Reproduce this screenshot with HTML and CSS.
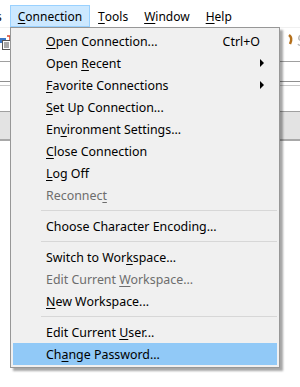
FILE: index.html
```html
<!DOCTYPE html>
<html lang="en">
<head>
    <meta charset="UTF-8">
    <title>Connection menu</title>
    <link rel="stylesheet" href="styles.css">
</head>
<body>
    <div class="menubar">
        <span class="menubar-item cut">s</span>
        <span class="menubar-item active"><u>C</u>onnection</span>
        <span class="menubar-item"><u>T</u>ools</span>
        <span class="menubar-item"><u>W</u>indow</span>
        <span class="menubar-item"><u>H</u>elp</span>
    </div>

    <div class="toolbar">
        <svg class="tool-left" width="11" height="15" viewBox="0 0 11 15">
            <rect x="0" y="3" width="6" height="5" fill="#3a78c8"/>
            <path d="M7 1 L10 1 L10 5" stroke="#d9452b" stroke-width="1.5" fill="none"/>
            <rect x="2.5" y="5.5" width="8" height="9" fill="#fff" stroke="#555"/>
            <line x1="4" y1="8" x2="9" y2="8" stroke="#555"/>
            <line x1="4" y1="10" x2="9" y2="10" stroke="#555"/>
            <line x1="4" y1="12" x2="9" y2="12" stroke="#555"/>
        </svg>
        <span class="spacer"></span>
        <svg class="tool-right" width="17" height="14" viewBox="0 0 17 14">
            <path d="M1 2 Q5 5 2 11" stroke="#b4701c" stroke-width="2.5" fill="none"/>
            <path d="M16 3 Q12 1 11 4 Q10 7 14 8 Q17 10 13 12 Q11 13 10 11" stroke="#b8b8b8" stroke-width="1.5" fill="none"/>
        </svg>
    </div>

    <div class="pane">
        <div class="pane-row"></div>
        <div class="pane-gap"></div>
        <div class="pane-tall"></div>
        <div class="pane-band"></div>
    </div>

    <div class="dropdown">
        <div class="item"><span class="label"><u>O</u>pen Connection...</span><span class="shortcut">Ctrl+O</span></div>
        <div class="item"><span class="label">Open <u>R</u>ecent</span><span class="arrow"></span></div>
        <div class="item"><span class="label"><u>F</u>avorite Connections</span><span class="arrow"></span></div>
        <div class="item"><span class="label"><u>S</u>et Up Connection...</span></div>
        <div class="item"><span class="label">En<u>v</u>ironment Settings...</span></div>
        <div class="item"><span class="label"><u>C</u>lose Connection</span></div>
        <div class="item"><span class="label"><u>L</u>og Off</span></div>
        <div class="item disabled"><span class="label">Reconnec<u>t</u></span></div>
        <div class="separator"></div>
        <div class="item"><span class="label">Choose Character Encoding...</span></div>
        <div class="separator"></div>
        <div class="item"><span class="label">Switch to Wor<u>k</u>space...</span></div>
        <div class="item disabled"><span class="label">Edit Current <u>W</u>orkspace...</span></div>
        <div class="item"><span class="label"><u>N</u>ew Workspace...</span></div>
        <div class="separator"></div>
        <div class="item"><span class="label">Edit Current <u>U</u>ser...</span></div>
        <div class="item selected"><span class="label">Ch<u>a</u>nge Password...</span></div>
    </div>
</body>
</html>
```

FILE: styles.css
```css
body {
    margin: 0;
    width: 300px;
    height: 387px;
    overflow: hidden;
    position: relative;
    background-color: #fff;
    font-family: 'Noto Sans', 'DejaVu Sans', sans-serif;
    font-size: 12px;
    color: #000;
}

u {
    text-decoration: underline;
    text-underline-offset: 2px;
}

/* menu bar */
.menubar {
    display: flex;
    height: 22px;
    padding-top: 5px;
    border-bottom: 1px solid #f0f0f0;
}

.menubar-item {
    display: flex;
    align-items: center;
    padding: 0 7px;
    border: 1px solid transparent;
    height: 20px;
}

.menubar-item.cut {
    margin-left: -12px;
}

.menubar-item.active {
    background-color: #cce8ff;
    border-color: #99d1ff;
}

/* toolbar behind the menu */
.toolbar {
    display: flex;
    align-items: center;
    height: 33px;
    border-bottom: 1px solid #a0a0a0;
}

.tool-left {
    margin-top: -4px;
}

.spacer {
    flex: 1;
}

.tool-right {
    margin-top: -10px;
    margin-right: -5px;
}

.pane-row {
    height: 19px;
    border-bottom: 1px solid #909090;
}

.pane-gap {
    height: 3px;
    border-bottom: 1px solid #c8c8c8;
}

.pane-tall {
    height: 25px;
    border-bottom: 1px solid #a0a0a0;
}

.pane-band {
    height: 27px;
    background-color: #e3e3e3;
    border-bottom: 2px solid #a8a8a8;
}

/* dropdown */
.dropdown {
    position: absolute;
    left: 10px;
    top: 27px;
    width: 264px;
    padding: 2px;
    background-color: #f0f0f0;
    border: 1px solid #979797;
    box-shadow: 3px 3px 2px rgba(0, 0, 0, 0.35);
    font-size: 12.4px;
}

.item {
    display: flex;
    align-items: center;
    height: 22px;
    padding-left: 33px;
    padding-right: 12px;
}

.item .label {
    flex: 1;
}

.item.disabled {
    color: #6d6d6d;
}

.item.selected {
    background-color: #91c9f7;
}

.shortcut {
    margin-right: 5px;
}

.arrow {
    width: 0;
    height: 0;
    border-top: 4px solid transparent;
    border-bottom: 4px solid transparent;
    border-left: 4px solid #000;
    margin-right: 1px;
}

.separator {
    height: 1px;
    margin: 4px 0 4px 28px;
    background-color: #d7d7d7;
}
```
